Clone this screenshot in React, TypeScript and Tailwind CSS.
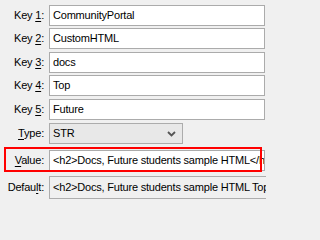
import React from "react";

const font = { fontFamily: '"Liberation Sans", Arial, sans-serif' };

function Label({ pre, u, post }: { pre: string; u: string; post: string }) {
  return (
    <div className="w-[44px] shrink-0 text-right whitespace-nowrap text-[11px] text-black leading-none">
      {pre}
      <span className="underline underline-offset-[2px]">{u}</span>
      {post}
    </div>
  );
}

function TextBox({ value, className = "" }: { value: string; className?: string }) {
  return (
    <div
      className={
        "ml-[5px] h-[21px] border border-[#ababab] bg-white flex items-center pl-[3px] overflow-hidden whitespace-nowrap text-[11px] text-black " +
        className
      }
    >
      {value}
    </div>
  );
}

export default function App() {
  const keys = ["CommunityPortal", "CustomHTML", "docs", "Top", "Future"];
  const gaps = ["mt-[5px]", "mt-[2px]", "mt-[3px]", "mt-[2px]", "mt-[3px]"];
  return (
    <div className="min-h-screen bg-[#f0f0f0]">
      <div
        className="relative w-[266px] h-[202px] bg-[#f0f0f0] overflow-hidden tracking-[-0.2px]"
        style={font}
      >
        {keys.map((k, i) => (
          <div key={i} className={"flex items-center h-[21px] pr-[1px] " + gaps[i]}>
            <Label pre="Key " u={String(i + 1)} post=":" />
            <TextBox value={k} className="flex-1" />
          </div>
        ))}
        <div className="flex items-center h-[21px] mt-[3px]">
          <Label pre="" u="T" post="ype:" />
          <div className="ml-[5px] w-[134px] h-[21px] border border-[#acacac] bg-[#e8e8e8] flex items-center justify-between pl-[3px] pr-[6px] text-[11px] text-black">
            <span>STR</span>
            <svg width="9" height="6" viewBox="0 0 9 6">
              <polyline points="1,1 4.5,4.5 8,1" fill="none" stroke="#555" strokeWidth="1.8" />
            </svg>
          </div>
        </div>
        <div className="flex items-center h-[21px] mt-[6px] pr-[1px]">
          <Label pre="" u="V" post="alue:" />
          <TextBox value="<h2>Docs, Future students sample HTML</h2>" className="flex-1" />
        </div>
        <div className="flex items-center h-[23px] mt-[5px]">
          <Label pre="Defau" u="l" post="t:" />
          <div className="ml-[5px] w-[240px] shrink-0 h-[23px] border border-[#adadad] bg-[#f0f0f0] flex items-center pl-[3px] overflow-hidden whitespace-nowrap text-[11px] text-black">
            {"<h2>Docs, Future students sample HTML Top</h2>"}
          </div>
        </div>
        <div className="absolute left-[4px] top-[147px] w-[258px] h-[25px] border-2 border-[#ff0000] pointer-events-none" />
      </div>
    </div>
  );
}
